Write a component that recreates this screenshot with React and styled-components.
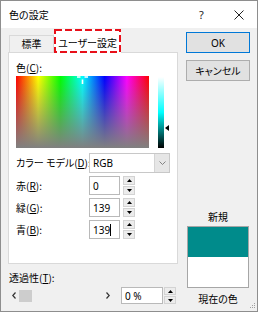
import React from "react";
import styled, { createGlobalStyle } from "styled-components";

const jp = `"Noto Sans CJK JP", "Noto Sans", sans-serif`;
const latin = `"Noto Sans", "Liberation Sans", "Noto Sans CJK JP", sans-serif`;

const Global = createGlobalStyle`
  html, body { margin: 0; padding: 0; background: #ffffff; }
  body { font-family: ${jp}; }
`;

const Window = styled.div`
  position: relative;
  width: 258px;
  height: 312px;
  box-sizing: border-box;
  border: 1px solid #8e8e8e;
  background: #f0f0f0;
  display: flex;
  flex-direction: column;
  font-family: ${jp};
  font-feature-settings: "palt";
  font-size: 10px;
  line-height: 12px;
  color: #000;
`;

const TitleBar = styled.div`
  height: 27px;
  background: #ffffff;
  display: flex;
  align-items: center;
  padding-left: 8px;
`;

const Title = styled.div`
  flex: 1;
  font-size: 10px;
  padding-top: 1px;
`;

const CaptionButton = styled.div`
  width: 37px;
  height: 27px;
  display: flex;
  align-items: center;
  justify-content: center;
  font-family: ${latin};
  font-size: 11px;
  color: #222;
`;

const Body = styled.div`
  flex: 1;
  display: flex;
`;

const LeftColumn = styled.div`
  width: 170px;
  padding-left: 7px;
  display: flex;
  flex-direction: column;
`;

const TabStrip = styled.div`
  height: 23px;
  margin-top: 1px;
  display: flex;
  align-items: flex-end;
`;

const Tab = styled.div`
  position: relative;
  box-sizing: border-box;
  display: flex;
  align-items: center;
  justify-content: center;
  flex: none;
  width: ${(p) => p.$w}px;
  height: ${(p) => (p.$active ? 24 : 17)}px;
  margin-left: ${(p) => (p.$active ? 0 : 1)}px;
  margin-bottom: ${(p) => (p.$active ? -1 : 0)}px;
  padding-top: ${(p) => (p.$active ? 3 : 0)}px;
  background: ${(p) => (p.$active ? "#ffffff" : "#f0f0f0")};
  border: ${(p) => (p.$active ? "none" : "1px solid #d9d9d9")};
  border-bottom: none;
  z-index: ${(p) => (p.$active ? 2 : 1)};
`;

const DashOverlay = styled.svg`
  position: absolute;
  left: 0;
  top: 0;
  width: 100%;
  height: 100%;
  pointer-events: none;
`;

const Panel = styled.div`
  box-sizing: border-box;
  width: 170px;
  height: 212px;
  background: #ffffff;
  border: 1px solid #d9d9d9;
  padding: 9px 7px 0 7px;
  display: flex;
  flex-direction: column;
`;

const FieldLabel = styled.div`
  height: 12px;
  white-space: nowrap;
  u {
    text-decoration-thickness: 1px;
    text-underline-offset: 1px;
  }
`;

const SpectrumRow = styled.div`
  margin-top: 2px;
  display: flex;
  align-items: flex-start;
`;

const Spectrum = styled.div`
  position: relative;
  width: 133px;
  height: 72px;
  background: linear-gradient(to bottom, rgba(128, 128, 128, 0), rgb(128, 128, 128)),
    linear-gradient(
      to right,
      #ff0000 0%,
      #ffff00 16.67%,
      #00ff00 33.33%,
      #00ffff 50%,
      #0000ff 66.67%,
      #ff00ff 83.33%,
      #ff0000 100%
    );
`;

const Crosshair = styled.svg`
  position: absolute;
  left: 61px;
  top: -2px;
  width: 11px;
  height: 10px;
`;

const LumBar = styled.div`
  width: 6px;
  height: 71px;
  margin-left: 9px;
  margin-top: 1px;
  background: linear-gradient(to bottom, #ffffff 0%, #00ffff 50%, #000000 100%);
`;

const LumArrow = styled.svg`
  width: 4px;
  height: 6px;
  margin-left: 1px;
  margin-top: 49px;
`;

const Form = styled.div`
  margin-top: 5px;
  display: flex;
  flex-direction: column;
  gap: 3px;
`;

const Row = styled.div`
  display: flex;
  align-items: center;
  height: ${(p) => p.$h}px;
`;

const RowLabel = styled(FieldLabel)`
  width: 73px;
`;

const Select = styled.div`
  box-sizing: border-box;
  width: 81px;
  height: 20px;
  border: 1px solid #c8c8c8;
  background: #ffffff;
  display: flex;
  font-family: ${latin};
  font-size: 10px;
`;

const SelectValue = styled.div`
  flex: 1;
  display: flex;
  align-items: center;
  padding-left: 3px;
`;

const SelectButton = styled.div`
  width: 14px;
  background: #e6e6e6;
  border-left: 1px solid #d4d4d4;
  display: flex;
  align-items: center;
  justify-content: center;
`;

const TextBox = styled.div`
  box-sizing: border-box;
  width: ${(p) => p.$w}px;
  height: 100%;
  margin-left: ${(p) => p.$ml || 0}px;
  border: 1px solid #b9b9b9;
  background: #ffffff;
  display: flex;
  align-items: center;
  padding-left: 3px;
  font-family: ${latin};
  font-size: 10px;
`;

const Caret = styled.span`
  display: inline-block;
  width: 1px;
  height: 12px;
  background: #000;
`;

const Spinner = styled.div`
  box-sizing: border-box;
  width: 12px;
  height: 100%;
  margin-left: ${(p) => p.$gap}px;
  display: flex;
  flex-direction: column;
  gap: 1px;
`;

const SpinButton = styled.div`
  flex: 1;
  background: #ececec;
  border: 1px solid #d3d3d3;
  display: flex;
  align-items: center;
  justify-content: center;
`;

const BelowLabel = styled(FieldLabel)`
  margin-top: 8px;
  padding-left: 1px;
`;

const ScrollRow = styled.div`
  margin-top: 3px;
  height: 17px;
  display: flex;
  align-items: center;
`;

const ScrollBar = styled.div`
  width: 104px;
  margin-left: 1px;
  height: 17px;
  display: flex;
  align-items: center;
  color: #444;
`;

const ScrollArrow = styled.div`
  width: ${(p) => p.$w}px;
  display: flex;
  align-items: center;
  justify-content: center;
`;

const Thumb = styled.div`
  width: 13px;
  height: 12px;
  background: #cdcdcd;
`;

const Track = styled.div`
  flex: 1;
`;

const RightColumn = styled.div`
  width: 64px;
  margin-left: 8px;
  padding-top: 4px;
  padding-bottom: 6px;
  display: flex;
  flex-direction: column;
`;

const Button = styled.div`
  box-sizing: border-box;
  height: 21px;
  margin-bottom: 7px;
  background: #e1e1e1;
  border: 1px solid ${(p) => (p.$default ? "#0078d7" : "#adadad")};
  display: flex;
  align-items: center;
  justify-content: center;
  font-family: ${(p) => (p.$latin ? latin : jp)};
  font-size: 10px;
`;

const Spacer = styled.div`
  flex: 1;
`;

const PreviewLabel = styled.div`
  text-align: center;
  height: 12px;
`;

const Preview = styled.div`
  box-sizing: border-box;
  margin: 3px 1px 5px 1px;
  height: 62px;
  border: 1px solid #a6a6a6;
  display: flex;
  flex-direction: column;
`;

const Swatch = styled.div`
  flex: 1;
  background: ${(p) => p.$color};
`;

const Grip = styled.svg`
  position: absolute;
  right: 1px;
  bottom: 1px;
  width: 8px;
  height: 8px;
`;

const Up = () => (
  <svg width="5" height="3" viewBox="0 0 5 3">
    <path d="M2.5 0 L5 3 L0 3 Z" fill="#000" />
  </svg>
);
const Down = () => (
  <svg width="5" height="3" viewBox="0 0 5 3">
    <path d="M0 0 L5 0 L2.5 3 Z" fill="#000" />
  </svg>
);

const Spin = ({ gap = 3 }) => (
  <Spinner $gap={gap}>
    <SpinButton>
      <Up />
    </SpinButton>
    <SpinButton>
      <Down />
    </SpinButton>
  </Spinner>
);

export default function App() {
  return (
    <>
      <Global />
      <Window>
        <TitleBar>
          <Title>色の設定</Title>
          <CaptionButton>?</CaptionButton>
          <CaptionButton>
            <svg width="10" height="10" viewBox="0 0 10 10">
              <path d="M0.5 0.5 L9.5 9.5 M9.5 0.5 L0.5 9.5" stroke="#222" strokeWidth="1" />
            </svg>
          </CaptionButton>
        </TitleBar>
        <Body>
          <LeftColumn>
            <TabStrip>
              <Tab $w={45}>標準</Tab>
              <Tab $w={67} $active>
                ユーザー設定
                <DashOverlay viewBox="0 0 67 24" preserveAspectRatio="none">
                  <rect
                    x="1"
                    y="1"
                    width="65"
                    height="22"
                    fill="none"
                    stroke="#e8101a"
                    strokeWidth="2"
                    strokeDasharray="7 3"
                  />
                </DashOverlay>
              </Tab>
            </TabStrip>
            <Panel>
              <FieldLabel>
                色(<u>C</u>):
              </FieldLabel>
              <SpectrumRow>
                <Spectrum>
                  <Crosshair viewBox="0 0 11 10">
                    <path d="M0 3 H3.5 M7.5 3 H11 M5.5 5.5 V10" stroke="#fff" strokeWidth="1.6" />
                  </Crosshair>
                </Spectrum>
                <LumBar />
                <LumArrow viewBox="0 0 4 6">
                  <path d="M0 3 L4 0 L4 6 Z" fill="#000" />
                </LumArrow>
              </SpectrumRow>
              <Form>
                <Row $h={20}>
                  <RowLabel>
                    カラー モデル(<u>D</u>):
                  </RowLabel>
                  <Select>
                    <SelectValue>RGB</SelectValue>
                    <SelectButton>
                      <svg width="7" height="4" viewBox="0 0 7 4">
                        <path d="M0.5 0.5 L3.5 3.5 L6.5 0.5" stroke="#777" fill="none" strokeWidth="0.9" />
                      </svg>
                    </SelectButton>
                  </Select>
                </Row>
                <Row $h={19}>
                  <RowLabel>
                    赤(<u>R</u>):
                  </RowLabel>
                  <TextBox $w={31}>0</TextBox>
                  <Spin />
                </Row>
                <Row $h={19}>
                  <RowLabel>
                    緑(<u>G</u>):
                  </RowLabel>
                  <TextBox $w={31}>139</TextBox>
                  <Spin />
                </Row>
                <Row $h={19}>
                  <RowLabel>
                    青(<u>B</u>):
                  </RowLabel>
                  <TextBox $w={31}>
                    139
                    <Caret />
                  </TextBox>
                  <Spin />
                </Row>
              </Form>
            </Panel>
            <BelowLabel>
              透過性(<u>T</u>):
            </BelowLabel>
            <ScrollRow>
              <ScrollBar>
                <ScrollArrow $w={10}>
                  <svg width="4" height="7" viewBox="0 0 4 7">
                    <path d="M3.5 0.5 L0.8 3.5 L3.5 6.5" stroke="#333" fill="none" strokeWidth="1.2" />
                  </svg>
                </ScrollArrow>
                <Thumb />
                <Track />
                <ScrollArrow $w={10}>
                  <svg width="4" height="7" viewBox="0 0 4 7">
                    <path d="M0.5 0.5 L3.2 3.5 L0.5 6.5" stroke="#333" fill="none" strokeWidth="1.2" />
                  </svg>
                </ScrollArrow>
              </ScrollBar>
              <TextBox $w={42} $ml={8}>
                0 %
              </TextBox>
              <Spin gap={1} />
            </ScrollRow>
          </LeftColumn>
          <RightColumn>
            <Button $default $latin>
              OK
            </Button>
            <Button>キャンセル</Button>
            <Spacer />
            <PreviewLabel>新規</PreviewLabel>
            <Preview>
              <Swatch $color="#008b8b" />
              <Swatch $color="#ffffff" />
            </Preview>
            <PreviewLabel>現在の色</PreviewLabel>
          </RightColumn>
        </Body>
        <Grip viewBox="0 0 8 8">
          <g fill="#a0a0a0">
            <rect x="6" y="1" width="1" height="1" />
            <rect x="4" y="3" width="1" height="1" />
            <rect x="6" y="3" width="1" height="1" />
            <rect x="2" y="5" width="1" height="1" />
            <rect x="4" y="5" width="1" height="1" />
            <rect x="6" y="5" width="1" height="1" />
          </g>
        </Grip>
      </Window>
    </>
  );
}
